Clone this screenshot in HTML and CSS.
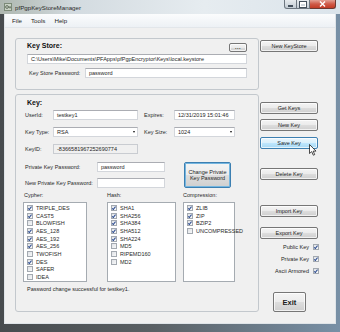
FILE: index.html
```html
<!DOCTYPE html>
<html lang="en">
<head>
  <meta charset="UTF-8">
  <title>pfPgpKeyStoreManager</title>
  <link rel="stylesheet" href="styles.css">
</head>
<body>
  <div class="window">
    <div class="titlebar">
      <svg class="app-icon" width="8" height="8" viewBox="0 0 8 8">
        <rect x="0.5" y="0.5" width="7" height="7" fill="#c9d2c4" stroke="#7c8a78"/>
        <circle cx="3" cy="4" r="1.4" fill="none" stroke="#4d5a49" stroke-width="0.8"/>
        <path d="M4.3 4H7M6 4v1.5" stroke="#4d5a49" stroke-width="0.8" fill="none"/>
      </svg>
      <span class="title">pfPgpKeyStoreManager</span>
      <div class="caption">
        <span class="cap-btn cap-min"><span class="glyph-min"></span></span>
        <span class="cap-btn cap-max"><span class="glyph-max"></span></span>
        <span class="cap-btn cap-close">
          <svg width="7" height="6" viewBox="0 0 7 6"><path d="M1 0.5L6 5.5M6 0.5L1 5.5" stroke="#fff" stroke-width="1.4"/></svg>
        </span>
      </div>
    </div>

    <div class="frame">
      <div class="menubar">
        <span>File</span>
        <span>Tools</span>
        <span>Help</span>
      </div>

      <div class="client">
        <div class="groups">
          <!-- Key store -->
          <div class="group keystore-group">
            <div class="group-head">
              <span class="group-title">Key Store:</span>
              <button class="btn browse">...</button>
            </div>
            <div class="textbox path">C:\Users\Mike\Documents\PFApps\pfPgpEncryptor\Keys\local.keystore</div>
            <div class="field-row">
              <span class="label store-label">Key Store Password:</span>
              <div class="textbox grow">password</div>
            </div>
          </div>

          <!-- Key -->
          <div class="group key-group">
            <div class="group-title key-title">Key:</div>

            <div class="key-grid">
              <span class="label">UserId:</span>
              <div class="textbox">testkey1</div>
              <span class="label right-label">Expires:</span>
              <div class="textbox">12/31/2019 15:01:46</div>

              <span class="label">Key Type:</span>
              <div class="textbox combo"><span>RSA</span><span class="arrow"></span></div>
              <span class="label right-label">Key Size:</span>
              <div class="textbox combo"><span>1024</span><span class="arrow"></span></div>

              <span class="label">KeyID:</span>
              <div class="textbox readonly">-8366581967252690774</div>
            </div>

            <div class="pw-grid">
              <span class="label pw-label">Private Key Password:</span>
              <div class="textbox pw-box">password</div>
              <span class="label pw-label">New Private Key Password:</span>
              <div class="textbox pw-box"></div>
              <button class="btn focused change-btn">Change Private<br>Key Password</button>
            </div>

            <div class="lists">
              <div class="list-col cypher-col">
                <div class="list-label">Cypher:</div>
                <div class="listbox">
                  <div class="item"><span class="cb on"></span>TRIPLE_DES</div>
                  <div class="item"><span class="cb on"></span>CAST5</div>
                  <div class="item"><span class="cb"></span>BLOWFISH</div>
                  <div class="item"><span class="cb on"></span>AES_128</div>
                  <div class="item"><span class="cb on"></span>AES_192</div>
                  <div class="item"><span class="cb on"></span>AES_256</div>
                  <div class="item"><span class="cb"></span>TWOFISH</div>
                  <div class="item"><span class="cb on"></span>DES</div>
                  <div class="item"><span class="cb"></span>SAFER</div>
                  <div class="item"><span class="cb"></span>IDEA</div>
                </div>
              </div>
              <div class="list-col hash-col">
                <div class="list-label">Hash:</div>
                <div class="listbox">
                  <div class="item"><span class="cb on"></span>SHA1</div>
                  <div class="item"><span class="cb on"></span>SHA256</div>
                  <div class="item"><span class="cb on"></span>SHA384</div>
                  <div class="item"><span class="cb on"></span>SHA512</div>
                  <div class="item"><span class="cb on"></span>SHA224</div>
                  <div class="item"><span class="cb"></span>MD5</div>
                  <div class="item"><span class="cb"></span>RIPEMD160</div>
                  <div class="item"><span class="cb"></span>MD2</div>
                </div>
              </div>
              <div class="list-col comp-col">
                <div class="list-label">Compression:</div>
                <div class="listbox">
                  <div class="item"><span class="cb on"></span>ZLIB</div>
                  <div class="item"><span class="cb on"></span>ZIP</div>
                  <div class="item"><span class="cb on"></span>BZIP2</div>
                  <div class="item"><span class="cb"></span>UNCOMPRESSED</div>
                </div>
              </div>
            </div>

            <div class="status">Password change successful for testkey1.</div>
          </div>
        </div>

        <!-- Right hand buttons -->
        <div class="side">
          <button class="btn side-btn new-store">New KeyStore</button>
          <button class="btn side-btn get-keys">Get Keys</button>
          <button class="btn side-btn new-key">New Key</button>
          <button class="btn side-btn hover save-key">Save Key</button>
          <button class="btn side-btn delete-key">Delete Key</button>
          <button class="btn side-btn import-key">Import Key</button>
          <button class="btn side-btn export-key">Export Key</button>
          <div class="check-row first-check">Public Key<span class="cb on"></span></div>
          <div class="check-row">Private Key<span class="cb on"></span></div>
          <div class="check-row">Ascii Armored<span class="cb on"></span></div>
          <button class="btn exit-btn">Exit</button>
        </div>
      </div>
    </div>

    <!-- Mouse pointer over Save Key -->
    <svg class="cursor" width="8" height="12" viewBox="0 0 8 12">
      <path d="M0.5 0.5V9.5L2.7 7.6L4.3 11.2L5.7 10.6L4.2 7.1H7Z" fill="#fff" stroke="#000" stroke-width="0.7" stroke-linejoin="round"/>
    </svg>
  </div>
</body>
</html>
```

FILE: styles.css
```css
/* Reset */
html, body {
  margin: 0;
  padding: 0;
}
* {
  box-sizing: border-box;
}
body {
  font-family: "Liberation Sans", Arial, sans-serif;
  font-size: 5.5px;
  color: #1e1e1e;
  background: #4f5457;
}

/* Window frame */
.window {
  position: relative;
  width: 340px;
  height: 332px;
  display: flex;
  flex-direction: column;
  overflow: hidden;
  background: linear-gradient(90deg, #474b4e 0%, #5a6064 45%, #7890a6 100%);
}
.titlebar {
  flex: none;
  height: 14px;
  display: flex;
  align-items: center;
  padding-left: 4px;
  padding-right: 4px;
  background: linear-gradient(90deg, #aeb7b0 0%, #d3dbe0 22%, #e6ecf0 60%, #dbe4eb 100%);
}
.app-icon {
  flex: none;
}
.title {
  margin-left: 3px;
  font-size: 6.2px;
  color: #2a2a2a;
}
.caption {
  margin-left: auto;
  align-self: flex-start;
  display: flex;
}
.cap-btn {
  height: 9px;
  display: flex;
  align-items: center;
  justify-content: center;
  border: 1px solid #6d7780;
  border-top: none;
}
.cap-min {
  width: 13px;
  border-radius: 0 0 0 3px;
  background: linear-gradient(#e7ebee, #c3ccd4);
}
.cap-max {
  width: 13px;
  border-left: none;
  background: linear-gradient(#e7ebee, #c3ccd4);
}
.cap-close {
  width: 26px;
  border-left: none;
  border-color: #6b3a33;
  border-radius: 0 0 3px 0;
  background: linear-gradient(#e3a094 0%, #cf5a48 50%, #c23b26 100%);
}
.glyph-min {
  width: 5px;
  height: 2px;
  margin-top: 3px;
  background: #fff;
  border: 0.5px solid #44505c;
}
.glyph-max {
  width: 6px;
  height: 5px;
  border: 1px solid #fff;
  border-top-width: 2px;
  outline: 0.5px solid #44505c;
}

.frame {
  flex: none;
  height: 310px;
  margin: 0 4px;
  display: flex;
  flex-direction: column;
  border: 1px solid #dfe4e8;
  border-top: none;
  background: #f0f0f0;
}
.menubar {
  flex: none;
  height: 14px;
  display: flex;
  align-items: center;
  gap: 9px;
  padding-left: 7px;
  font-size: 6.2px;
  background: linear-gradient(#fbfcfd, #edf1f5);
  border-bottom: 1px solid #e2e6ea;
}

/* Client area */
.client {
  flex: 1;
  display: flex;
  align-items: flex-start;
  padding: 10px 0 0 10px;
  background: #f0f0f0;
}
.groups {
  flex: none;
  width: 244px;
  display: flex;
  flex-direction: column;
}
.group {
  border: 1px solid #c3c8cd;
  border-radius: 3px;
}
.group-title {
  font-weight: bold;
  font-size: 7px;
  line-height: 7px;
  color: #111;
}
.label {
  white-space: nowrap;
  line-height: 10px;
  color: #2a2a2a;
}

/* Key store group */
.keystore-group {
  height: 52px;
  padding: 4px 11px 0 11px;
}
.group-head {
  height: 9px;
  display: flex;
  justify-content: space-between;
  align-items: flex-start;
}
.group-head .group-title {
  margin-top: -1px;
}
.browse {
  width: 18px;
  height: 9px;
  margin-right: 2px;
  font-size: 6px;
  font-weight: bold;
  letter-spacing: 0.5px;
  line-height: 5px;
  align-items: flex-start;
}
.path {
  margin-top: 2px;
  height: 9px;
}
.field-row {
  margin-top: 4px;
  display: flex;
  height: 10px;
}
.store-label {
  width: 58px;
  padding-left: 2px;
}
.grow {
  flex: 1;
}

/* Text boxes */
.textbox {
  height: 10px;
  display: flex;
  align-items: center;
  padding-left: 3px;
  background: #fff;
  border: 1px solid #d3d6db;
  border-top-color: #abadb3;
  white-space: nowrap;
  overflow: hidden;
}
.textbox.readonly {
  background: #f0f0f0;
  border-color: #c9ccd1;
}
.combo {
  justify-content: space-between;
  padding-right: 2px;
}
.arrow {
  width: 0;
  height: 0;
  border-left: 1.5px solid transparent;
  border-right: 1.5px solid transparent;
  border-top: 2px solid #111;
}

/* Key group */
.key-group {
  margin-top: 4px;
  height: 218px;
  padding: 4px 9px 0 9px;
}
.key-title {
  margin-left: 2px;
  line-height: 8px;
  height: 8px;
}
.key-grid {
  margin-top: 3px;
  display: grid;
  grid-template-columns: 28px 85px 36px 61px;
  grid-template-rows: 10px 10px 10px;
  row-gap: 7px;
}
.right-label {
  padding-left: 6px;
}
.pw-grid {
  margin-top: 8px;
  display: grid;
  grid-template-columns: 72px 68px 19px 47px;
  grid-template-rows: 10px 10px;
  row-gap: 6px;
}
.pw-label {
  grid-column: 1;
}
.pw-box {
  grid-column: 2;
}
.change-btn {
  grid-column: 4;
  grid-row: 1 / 3;
  height: 26px;
  line-height: 6.5px;
}

/* Check lists */
.lists {
  margin-top: 3px;
  margin-left: -2px;
  display: flex;
}
.list-col {
  flex: none;
}
.cypher-col {
  width: 64px;
}
.hash-col {
  width: 69px;
  margin-left: 20px;
}
.comp-col {
  width: 52px;
  margin-left: 7px;
}
.list-label {
  line-height: 8px;
  padding-left: 1px;
  color: #2a2a2a;
}
.hash-col .list-label,
.comp-col .list-label {
  padding-left: 0;
}
.listbox {
  margin-top: 3px;
  height: 80px;
  padding-top: 1px;
  background: #fff;
  border: 1px solid #a5abb1;
}
.item {
  height: 7.7px;
  display: flex;
  align-items: center;
  padding-left: 3px;
  white-space: nowrap;
  color: #2a2a2a;
}
.item .cb {
  margin-right: 3px;
}
.status {
  margin-top: 3px;
  padding-left: 2px;
  line-height: 8px;
}

/* Checkbox */
.cb {
  position: relative;
  flex: none;
  width: 6px;
  height: 6px;
  border: 1px solid #a3a9b0;
  background: linear-gradient(135deg, #dfe2e6, #f7f8f9);
}
.cb.on::after {
  content: "";
  position: absolute;
  left: 1.3px;
  top: 0;
  width: 1.2px;
  height: 2.6px;
  border-right: 0.8px solid #2a4a8f;
  border-bottom: 0.8px solid #2a4a8f;
  transform: rotate(40deg);
}

/* Buttons */
.btn {
  display: flex;
  align-items: center;
  justify-content: center;
  padding: 0;
  margin: 0;
  font-family: inherit;
  font-size: 5.5px;
  color: #1e1e1e;
  text-align: center;
  border: 1px solid #767676;
  border-radius: 2px;
  background: linear-gradient(#f4f4f4 0%, #ebebeb 50%, #dddddd 51%, #cfcfcf 100%);
  box-shadow: inset 0 0 0 1px rgba(255, 255, 255, 0.7);
}
.btn.hover {
  border-color: #3c7fb1;
  background: linear-gradient(#eaf6fd 0%, #d9f0fc 50%, #bee6fd 51%, #a7d9f5 100%);
}
.btn.focused {
  border-color: #3c7fb1;
  box-shadow: inset 0 0 0 1px #74b6e0;
}

/* Side column */
.side {
  flex: none;
  width: 59px;
  margin-left: 1px;
  display: flex;
  flex-direction: column;
}
.side-btn {
  width: 58px;
  height: 12px;
}
.new-store { margin-top: 2px; }
.get-keys { margin-top: 50px; }
.new-key { margin-top: 5px; }
.save-key { margin-top: 6px; }
.delete-key { margin-top: 19px; }
.import-key { margin-top: 25px; }
.export-key { margin-top: 10px; }
.check-row {
  height: 8px;
  margin-top: 4px;
  display: flex;
  align-items: center;
  justify-content: flex-end;
  white-space: nowrap;
}
.check-row .cb {
  margin-left: 4px;
}
.first-check {
  margin-top: 4px;
}
.exit-btn {
  align-self: center;
  margin-top: 17px;
  width: 33px;
  height: 20px;
  font-size: 7.5px;
  font-weight: bold;
}

.cursor {
  position: absolute;
  left: 309px;
  top: 144px;
}
```
